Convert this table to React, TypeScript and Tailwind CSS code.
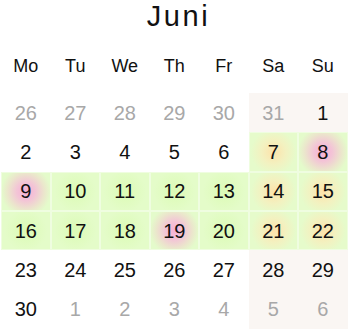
import React from 'react';

type Tone = 'plain' | 'weekend' | 'green' | 'greenWeekend' | 'pink';

interface Day {
  n: number;
  tone: Tone;
  muted?: boolean;
}

const weekdays = ['Mo', 'Tu', 'We', 'Th', 'Fr', 'Sa', 'Su'];

const rows: Day[][] = [
  [
    { n: 26, tone: 'plain', muted: true },
    { n: 27, tone: 'plain', muted: true },
    { n: 28, tone: 'plain', muted: true },
    { n: 29, tone: 'plain', muted: true },
    { n: 30, tone: 'plain', muted: true },
    { n: 31, tone: 'weekend', muted: true },
    { n: 1, tone: 'weekend' },
  ],
  [
    { n: 2, tone: 'plain' },
    { n: 3, tone: 'plain' },
    { n: 4, tone: 'plain' },
    { n: 5, tone: 'plain' },
    { n: 6, tone: 'plain' },
    { n: 7, tone: 'greenWeekend' },
    { n: 8, tone: 'pink' },
  ],
  [
    { n: 9, tone: 'pink' },
    { n: 10, tone: 'green' },
    { n: 11, tone: 'green' },
    { n: 12, tone: 'green' },
    { n: 13, tone: 'green' },
    { n: 14, tone: 'greenWeekend' },
    { n: 15, tone: 'greenWeekend' },
  ],
  [
    { n: 16, tone: 'green' },
    { n: 17, tone: 'green' },
    { n: 18, tone: 'green' },
    { n: 19, tone: 'pink' },
    { n: 20, tone: 'green' },
    { n: 21, tone: 'greenWeekend' },
    { n: 22, tone: 'greenWeekend' },
  ],
  [
    { n: 23, tone: 'plain' },
    { n: 24, tone: 'plain' },
    { n: 25, tone: 'plain' },
    { n: 26, tone: 'plain' },
    { n: 27, tone: 'plain' },
    { n: 28, tone: 'weekend' },
    { n: 29, tone: 'weekend' },
  ],
  [
    { n: 30, tone: 'plain' },
    { n: 1, tone: 'plain', muted: true },
    { n: 2, tone: 'plain', muted: true },
    { n: 3, tone: 'plain', muted: true },
    { n: 4, tone: 'plain', muted: true },
    { n: 5, tone: 'weekend', muted: true },
    { n: 6, tone: 'weekend', muted: true },
  ],
];

const toneClass = (tone: Tone) => {
  switch (tone) {
    case 'weekend':
      return 'bg-[#faf6f3]';
    case 'green':
      return 'bg-[radial-gradient(circle,#dcfbb6_0%,#e4fcc9_70%)] border border-[#effde0]';
    case 'greenWeekend':
      return 'bg-[radial-gradient(circle,#fde2aa_0%,#f3f1c0_40%,#e6fbcb_75%)] border border-[#effde0]';
    case 'pink':
      return 'bg-[radial-gradient(circle,#f6b0d6_0%,#f3c4d6_30%,#ebe6cc_60%,#e4fbcb_82%)] border border-[#effde0]';
    default:
      return 'bg-white';
  }
};

export default function App() {
  return (
    <div className="w-[353px] h-[331px] bg-white overflow-hidden font-['Liberation_Sans',Arial,sans-serif]">
      <div className="h-[47px] pl-[4px] text-center">
        <h1 className="text-[29px] leading-[33px] tracking-[0.09em] text-[#111]">Juni</h1>
      </div>

      <div className="ml-px w-[346.5px] grid grid-cols-7 h-[39px] items-center">
        {weekdays.map((d) => (
          <div key={d} className="text-center text-[18px] text-[#111]">
            {d}
          </div>
        ))}
      </div>

      <div className="ml-px mt-[7px] w-[346.5px] grid grid-cols-7">
        {rows.flat().map((day, i) => (
          <div
            key={i}
            className={`h-[39.3px] flex items-center justify-center text-[20px] ${toneClass(day.tone)} ${
              day.muted ? 'text-[#a8a8a8]' : 'text-[#111]'
            }`}
          >
            {day.n}
          </div>
        ))}
      </div>
    </div>
  );
}
